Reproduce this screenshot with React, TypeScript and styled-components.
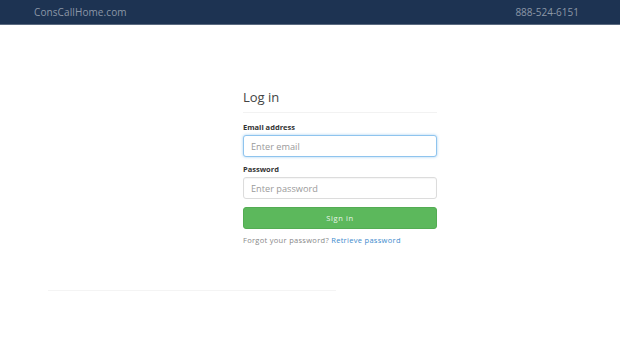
import React from "react";
import styled, { createGlobalStyle } from "styled-components";

const Global = createGlobalStyle`
  html, body { margin: 0; padding: 0; background: #fff; }
  body { font-family: "Open Sans", "Noto Sans", sans-serif; color: #333; }
  * { box-sizing: border-box; }
`;

const NavBar = styled.header`
  height: 25px;
  background: #1d3352;
  border-bottom: 1px solid #5a6a80;
  display: flex;
  align-items: center;
  justify-content: space-between;
  padding: 0 41px 0 34px;
`;

const Brand = styled.span`
  font-size: 10px;
  letter-spacing: 0.1px;
  color: #8c97a7;
`;

const Phone = styled.span`
  font-size: 10px;
  letter-spacing: 0;
  color: #8c97a7;
`;

const Main = styled.main`
  display: flex;
  flex-direction: column;
  align-items: center;
  padding-top: 63px;
`;

const Card = styled.form`
  width: 194px;
  margin-left: 60px;
  display: flex;
  flex-direction: column;
`;

const Title = styled.h1`
  margin: 0;
  font-size: 13px;
  font-weight: 400;
  color: #444;
  line-height: 18px;
  padding-bottom: 6px;
  border-bottom: 1px solid #f2f2f2;
  margin-bottom: 9px;
`;

const Label = styled.label`
  font-size: 7.5px;
  font-weight: 700;
  color: #333;
  line-height: 10px;
  margin-bottom: 3px;
`;

const Input = styled.input<{ $focus?: boolean }>`
  height: 22px;
  border: 1px solid ${(p) => (p.$focus ? "#8fc4ee" : "#dcdcdc")};
  border-radius: 3px;
  padding: 0 7px;
  font-family: inherit;
  font-size: 9.2px;
  color: #555;
  outline: none;
  box-shadow: ${(p) => (p.$focus ? "0 0 3px rgba(102,175,233,0.6)" : "inset 0 1px 1px rgba(0,0,0,0.04)")};
  margin-bottom: 7px;
  &::placeholder { color: #9a9a9a; }
`;

const Button = styled.button`
  height: 22px;
  background: #5cb85c;
  border: 1px solid #53ac53;
  border-radius: 3px;
  color: #e9f5e9;
  font-family: inherit;
  font-size: 7.5px;
  letter-spacing: 0.6px;
  margin-top: 1px;
  margin-bottom: 6px;
`;

const Help = styled.p`
  margin: 0;
  font-size: 7.5px;
  color: #888;
  letter-spacing: 0.3px;
  line-height: 10px;
`;

const Link = styled.a`
  color: #3d8bcd;
  text-decoration: none;
`;

const Footer = styled.div`
  display: flex;
  padding: 45px 0 0 48px;
`;

const Rule = styled.div`
  width: 288px;
  border-top: 1px solid #f4f4f4;
`;

export default function App() {
  return (
    <>
      <Global />
      <NavBar>
        <Brand>ConsCallHome.com</Brand>
        <Phone>888-524-6151</Phone>
      </NavBar>
      <Main>
        <Card onSubmit={(e) => e.preventDefault()}>
          <Title>Log in</Title>
          <Label>Email address</Label>
          <Input $focus placeholder="Enter email" />
          <Label>Password</Label>
          <Input type="password" placeholder="Enter password" />
          <Button type="submit">Sign in</Button>
          <Help>
            Forgot your password? <Link href="#">Retrieve password</Link>
          </Help>
        </Card>
      </Main>
      <Footer>
        <Rule />
      </Footer>
    </>
  );
}
